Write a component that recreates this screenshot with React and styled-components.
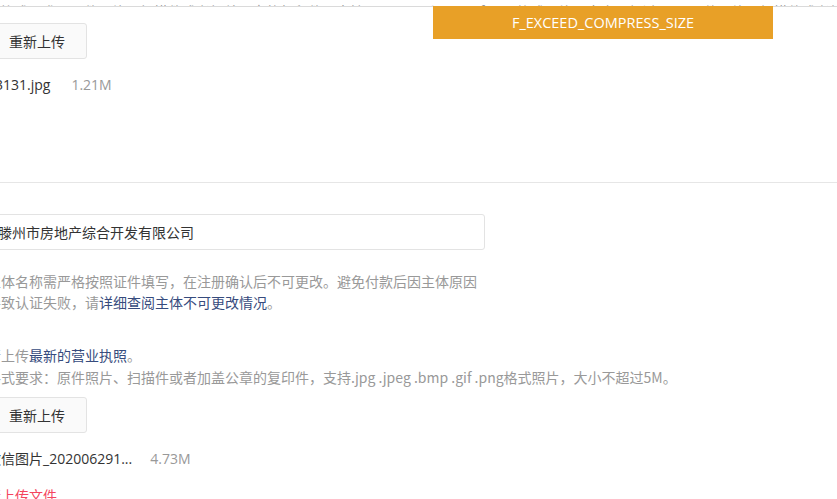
import React from "react";
import styled, { createGlobalStyle } from "styled-components";

const GlobalStyle = createGlobalStyle`
  html, body {
    margin: 0;
    padding: 0;
    background: #fff;
    overflow: hidden;
  }
  body {
    font-family: "Noto Sans CJK SC", "Open Sans", sans-serif;
    color: #333;
  }
`;

const Viewport = styled.div`
  position: relative;
  width: 837px;
  height: 499px;
  overflow: hidden;
`;

// the bottom edge of a line scrolled off above the view
const ClippedLine = styled.div`
  height: 6px;
  overflow: hidden;
  border-bottom: 1px solid #dadada;
  display: flex;
  align-items: flex-end;
  white-space: nowrap;
  font-size: 14px;
  line-height: 14px;
  color: #999;
  span {
    margin-bottom: -12px;
  }
`;

const Toast = styled.div`
  position: absolute;
  left: 433px;
  top: 6px;
  width: 340px;
  height: 33px;
  background: #e8a027;
  color: #fff;
  font-family: "Open Sans", "Noto Sans CJK SC", sans-serif;
  font-size: 14.5px;
  display: flex;
  align-items: center;
  justify-content: center;
`;

const Column = styled.div`
  margin-left: -13px;
  display: flex;
  flex-direction: column;
  align-items: flex-start;
`;

const Button = styled.button`
  height: 36px;
  padding: 0 21px;
  margin-top: ${(p) => p.$top || 0}px;
  background: #fafafa;
  border: 1px solid #e3e3e3;
  border-radius: 3px;
  font-family: inherit;
  font-size: 14px;
  color: #333;
`;

const FileRow = styled.div`
  margin-top: ${(p) => p.$top || 0}px;
  display: flex;
  align-items: center;
  height: 20px;
  font-size: 14px;
  line-height: 20px;
  white-space: nowrap;
`;

const FileName = styled.span`
  color: #333;
  font-family: "Open Sans", "Noto Sans CJK SC", sans-serif;
`;

const FileSize = styled.span`
  color: #999;
  margin-left: ${(p) => p.$gap}px;
  font-family: "Open Sans", "Noto Sans CJK SC", sans-serif;
`;

const Divider = styled.hr`
  margin: 0;
  margin-top: ${(p) => p.$top}px;
  border: 0;
  border-top: 1px solid #e6e6e6;
  width: 850px;
  align-self: stretch;
`;

const Input = styled.div`
  margin-top: ${(p) => p.$top}px;
  width: 498px;
  height: 36px;
  box-sizing: border-box;
  border: 1px solid #e3e3e3;
  border-radius: 3px;
  padding: 0 10px;
  display: flex;
  align-items: center;
  font-size: 14px;
  color: #333;
`;

const Help = styled.p`
  margin: ${(p) => p.$top}px 0 0;
  font-size: 14px;
  line-height: ${(p) => p.$lh || 21}px;
  color: #999;
  white-space: nowrap;
`;

const Link = styled.span`
  color: #364b7d;
`;

const ErrorText = styled.div`
  margin-top: ${(p) => p.$top}px;
  font-size: 14px;
  line-height: 20px;
  color: #f4455e;
`;

export default function App() {
  return (
    <>
      <GlobalStyle />
      <Viewport>
        <ClippedLine>
          <span>
            格式要求：原件照片、扫描件或者加盖公章的复印件，支持.jpg .jpeg .bmp .gif .png格式照片，大小不超过5M。原件照片、扫描件或者加盖公章的复印件，支持.jpg .jpeg .bmp
          </span>
        </ClippedLine>
        <Toast>F_EXCEED_COMPRESS_SIZE</Toast>
        <Column>
          <Button $top={16}>重新上传</Button>
          <FileRow $top={16}>
            <FileName>23131.jpg</FileName>
            <FileSize $gap={21}>1.21M</FileSize>
          </FileRow>
          <Divider $top={87} />
          <Input $top={31}>滕州市房地产综合开发有限公司</Input>
          <Help $top={21}>
            主体名称需严格按照证件填写，在注册确认后不可更改。避免付款后因主体原因
            <br />
            导致认证失败，请<Link>详细查阅主体不可更改情况</Link>。
          </Help>
          <Help $top={31} $lh={22}>
            请上传<Link>最新的营业执照</Link>。
            <br />
            格式要求：原件照片、扫描件或者加盖公章的复印件，支持.jpg .jpeg .bmp .gif .png格式照片，大小不超过5M。
          </Help>
          <Button $top={9}>重新上传</Button>
          <FileRow $top={16}>
            <FileName>微信图片_202006291...</FileName>
            <FileSize $gap={18}>4.73M</FileSize>
          </FileRow>
          <ErrorText $top={16}>请上传文件</ErrorText>
        </Column>
      </Viewport>
    </>
  );
}
